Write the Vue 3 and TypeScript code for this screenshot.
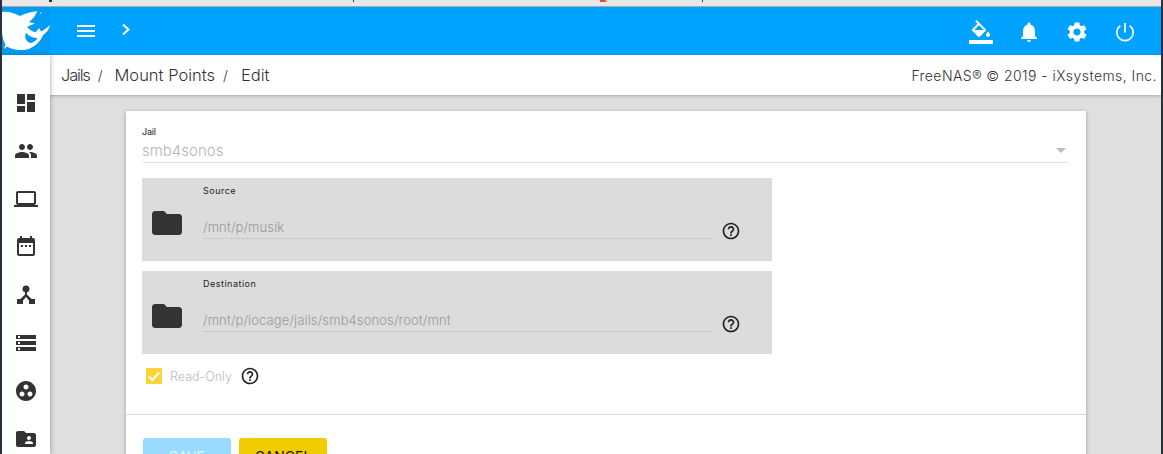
<script setup lang="ts">
type NavItem = { name: string; d: string };

const nav: NavItem[] = [
  { name: "dashboard", d: "M3 13h8V3H3v10zm0 8h8v-6H3v6zm10 0h8V11h-8v10zm0-18v6h8V3h-8z" },
  { name: "accounts", d: "M16 11c1.66 0 2.99-1.34 2.99-3S17.66 5 16 5c-1.66 0-3 1.34-3 3s1.34 3 3 3zm-8 0c1.66 0 2.99-1.34 2.99-3S9.66 5 8 5C6.34 5 5 6.34 5 8s1.34 3 3 3zm0 2c-2.33 0-7 1.17-7 3.5V19h14v-2.5c0-2.33-4.67-3.5-7-3.5zm8 0c-.29 0-.62.02-.97.05 1.16.84 1.97 1.97 1.97 3.45V19h6v-2.5c0-2.33-4.67-3.5-7-3.5z" },
  { name: "system", d: "M20 18c1.1 0 1.99-.9 1.99-2L22 6c0-1.1-.9-2-2-2H4c-1.1 0-2 .9-2 2v10c0 1.1.9 2 2 2H0v2h24v-2h-4zM4 6h16v10H4V6z" },
  { name: "tasks", d: "M9 10H7v2h2v-2zm4 0h-2v2h2v-2zm4 0h-2v2h2v-2zm2-7h-1V1h-2v2H8V1H6v2H5c-1.11 0-2 .9-2 2v14a2 2 0 0 0 2 2h14a2 2 0 0 0 2-2V5c0-1.1-.9-2-2-2zm0 16H5V8h14v11z" },
  { name: "network", d: "M12 2.500a3.500 3.500 0 0 1 1 6.860v2.200l4.600 4.440H21v5h-6v-3.600L12 14l-3 3.400V21H3v-5h3.400L11 11.560v-2.200a3.500 3.500 0 0 1 1-6.860z" },
  { name: "storage", d: "M2 20h20v-4H2v4zm2-3h2v2H4v-2zM2 4v4h20V4H2zm4 3H4V5h2v2zm-4 7h20v-4H2v4zm2-3h2v2H4v-2z" },
  { name: "directory", d: "M12 2C6.48 2 2 6.48 2 12s4.48 10 10 10 10-4.48 10-10S17.52 2 12 2zM8 17.5c-1.38 0-2.5-1.12-2.5-2.5s1.12-2.5 2.5-2.5 2.5 1.12 2.5 2.5-1.12 2.5-2.5 2.5zM9.5 8c0-1.38 1.12-2.5 2.5-2.5s2.5 1.12 2.5 2.5-1.12 2.5-2.5 2.5S9.5 9.38 9.5 8zm6.5 9.5c-1.38 0-2.5-1.12-2.5-2.5s1.12-2.5 2.5-2.5 2.5 1.12 2.5 2.5-1.12 2.5-2.5 2.5z" },
  { name: "sharing", d: "M20 6h-8l-2-2H4c-1.1 0-1.99.9-1.99 2L2 18c0 1.1.9 2 2 2h16c1.1 0 2-.9 2-2V8c0-1.1-.9-2-2-2zm-5 3c1.1 0 2 .9 2 2s-.9 2-2 2-2-.9-2-2 .9-2 2-2zm4 8h-8v-1c0-1.33 2.67-2 4-2s4 .67 4 2v1z" },
];

const folder = "M10 4H4c-1.1 0-1.99.9-1.99 2L2 18c0 1.1.9 2 2 2h16c1.1 0 2-.9 2-2V8c0-1.1-.9-2-2-2h-8l-2-2z";
const help = "M11 18h2v-2h-2v2zm1-16C6.48 2 2 6.48 2 12s4.48 10 10 10 10-4.48 10-10S17.52 2 12 2zm0 18c-4.41 0-8-3.59-8-8s3.59-8 8-8 8 3.59 8 8-3.59 8-8 8zm0-14c-2.21 0-4 1.79-4 4h2c0-1.1.9-2 2-2s2 .9 2 2c0 2-3 1.75-3 5h2c0-2.25 3-2.5 3-5 0-2.21-1.79-4-4-4z";

const paths = [
  { label: "Source", value: "/mnt/p/musik" },
  { label: "Destination", value: "/mnt/p/iocage/jails/smb4sonos/root/mnt" },
];

// clipped bits of the page text sitting behind the strip
const specks = [
  { x: 47, w: 3, c: "#333" },
  { x: 351, w: 1, c: "#246" },
  { x: 598, w: 5, c: "#e0407a" },
  { x: 603, w: 2, c: "#e0a030" },
  { x: 700, w: 1, c: "#62288a" },
];
</script>

<template>
  <div class="screen">
    <div class="strip">
      <i v-for="s in specks" :key="s.x" class="speck" :style="{ left: s.x + 'px', width: s.w + 'px', background: s.c }"></i>
    </div>

    <header class="topbar">
      <div class="logo">
        <svg width="48" height="48" viewBox="2 7 48 48">
          <path fill="#fff" d="M2 12C8 11 14 13 20 16C26 13 32 12 37 11C36 15 33 19 29 22L35 23.500L30 25.500L27 27C30 30 33 32 36 32L39 28L41 31.500C44 30 47 28 50 25C49 30 46 33 43 35C41 41 35 47 27 49.500C19 51 11 49 7 46.500L4 49L5.500 44.500C3 40 2 36 2 30Z" />
          <path fill="#009bf5" d="M26 33C24 37 26 41 30 43C33 42.500 36 41 37.500 38C33 38 29 36 26 33Z" />
          <circle cx="41" cy="13" r="1" fill="#fff" opacity="0.5" />
        </svg>
      </div>
      <button class="menu" aria-label="Menu"><span></span><span></span><span></span></button>
      <svg class="chev" width="10" height="14" viewBox="0 0 10 14" fill="none" stroke="#fff" stroke-width="2">
        <path d="M2 1.500L7.500 6.500L2 11.500" />
      </svg>
      <div class="top-actions">
        <svg width="24" height="24" viewBox="0 0 24 24" fill="#fff">
          <path d="M16.56 8.940L7.620 0 6.210 1.410l2.380 2.380-5.150 5.150c-.59.590-.59 1.540 0 2.120l5.500 5.500c.29.290.68.440 1.060.440s.77-.15 1.060-.44l5.500-5.500c.59-.58.59-1.530 0-2.120zM5.210 10L10 5.210 14.790 10H5.210zM19 11.500s-2 2.170-2 3.500c0 1.100.9 2 2 2s2-.9 2-2c0-1.330-2-3.500-2-3.500z" />
          <path d="M0 20h24v4H0z" />
        </svg>
        <svg width="24" height="24" viewBox="0 0 24 24" fill="#fff">
          <path d="M12 22c1.100 0 2-.9 2-2h-4c0 1.100.89 2 2 2zm6-6v-5c0-3.070-1.640-5.640-4.500-6.320V4c0-.83-.67-1.500-1.500-1.500s-1.500.67-1.500 1.500v.68C7.630 5.360 6 7.920 6 11v5l-2 2v1h16v-1l-2-2z" />
        </svg>
        <svg width="24" height="24" viewBox="0 0 24 24" fill="#fff">
          <path d="M19.140 12.940c.04-.3.06-.61.06-.94 0-.32-.02-.64-.07-.94l2.030-1.580c.18-.14.23-.41.12-.61l-1.920-3.320c-.12-.22-.37-.29-.59-.22l-2.390.96c-.5-.38-1.030-.7-1.620-.94l-.36-2.540c-.04-.24-.24-.41-.48-.41h-3.840c-.24 0-.43.17-.47.41l-.36 2.540c-.59.24-1.130.57-1.620.94l-2.390-.96c-.22-.08-.47 0-.59.22L2.740 8.870c-.12.21-.08.47.12.61l2.030 1.580c-.05.3-.09.63-.09.94s.02.64.07.94l-2.030 1.580c-.18.14-.23.41-.12.61l1.920 3.320c.12.22.37.29.59.22l2.390-.96c.5.38 1.030.7 1.620.94l.36 2.54c.05.24.24.41.48.41h3.840c.24 0 .44-.17.47-.41l.36-2.540c.59-.24 1.130-.56 1.620-.94l2.390.96c.22.08.47 0 .59-.22l1.920-3.320c.12-.22.07-.47-.12-.61l-2.010-1.580zM12 15.600c-1.980 0-3.600-1.620-3.600-3.600s1.620-3.600 3.600-3.600 3.600 1.620 3.600 3.600-1.620 3.600-3.600 3.600z" />
        </svg>
        <svg width="24" height="24" viewBox="0 0 24 24" fill="none" stroke="#fff" stroke-width="1.700">
          <path d="M12 3v9.500" />
          <path d="M7.300 5.800a8.200 8.200 0 1 0 9.400 0" />
        </svg>
      </div>
    </header>

    <div class="body">
      <nav class="sidebar">
        <div v-for="item in nav" :key="item.name" class="nav-item">
          <svg width="24" height="24" viewBox="0 0 24 24" fill="#333"><path :d="item.d" /></svg>
        </div>
      </nav>

      <main class="main">
        <div class="crumbs">
          <div class="trail">
            <span>Jails</span><em>/</em><span>Mount Points</span><em>/</em><span>Edit</span>
          </div>
          <div class="copyright">FreeNAS® © 2019 - iXsystems, Inc.</div>
        </div>

        <div class="content">
          <section class="card">
            <div class="fields">
              <div class="select-field">
                <label>Jail</label>
                <div class="select-value">
                  <span>smb4sonos</span>
                  <i class="caret"></i>
                </div>
              </div>

              <div v-for="p in paths" :key="p.label" class="path-box">
                <svg class="folder" width="36" height="36" viewBox="0 0 24 24" fill="#333"><path :d="folder" /></svg>
                <div class="path-input">
                  <label>{{ p.label }}</label>
                  <div class="path-value">{{ p.value }}</div>
                </div>
                <svg class="help" width="20" height="20" viewBox="0 0 24 24" fill="#222"><path :d="help" /></svg>
              </div>

              <div class="check-row">
                <span class="check">
                  <svg width="16" height="16" viewBox="0 0 16 16" fill="none" stroke="#fff" stroke-width="2"><path d="M3 8.500L6.500 12L13 4.500" /></svg>
                </span>
                <span class="check-label">Read-Only</span>
                <svg width="20" height="20" viewBox="0 0 24 24" fill="#222"><path :d="help" /></svg>
              </div>
            </div>

            <div class="actions">
              <button class="btn save">SAVE</button>
              <button class="btn cancel">CANCEL</button>
            </div>
          </section>
        </div>
      </main>
    </div>
  </div>
</template>

<style>
html, body { margin: 0; overflow: hidden; }
</style>

<style scoped>
.screen {
  width: 1163px;
  height: 454px;
  padding: 0 2px;
  box-sizing: border-box;
  overflow: hidden;
  display: flex;
  flex-direction: column;
  background: #2a3040;
  font-family: "Inter", "Liberation Sans", sans-serif;
  color: #333;
}
.strip {
  position: relative;
  flex: none;
  height: 6px;
  background: #e9e8e6;
  border-bottom: 1px solid #a9a9a6;
}
.speck { position: absolute; top: 0; height: 2px; }

.topbar {
  flex: none;
  height: 48px;
  display: flex;
  align-items: center;
  background: #00a2ff;
}
.logo {
  flex: none;
  width: 48px;
  height: 48px;
  background: #009bf5;
}
.logo svg { display: block; }
.menu {
  margin-left: 27px;
  width: 18px;
  height: 12px;
  padding: 0;
  border: 0;
  background: none;
  display: flex;
  flex-direction: column;
  justify-content: space-between;
}
.menu span { height: 2px; background: #fff; }
.chev { margin: -3px 0 0 26px; }
.top-actions {
  margin-left: auto;
  padding-right: 24px;
  display: flex;
  gap: 24px;
  margin-top: 2px;
}

.body { flex: 1; min-height: 0; display: flex; }
.sidebar {
  flex: none;
  width: 48px;
  padding-top: 24px;
  background: #fff;
  box-shadow: 1px 0 4px rgba(0, 0, 0, 0.25);
  position: relative;
  z-index: 2;
}
.nav-item {
  height: 48px;
  display: flex;
  align-items: center;
  justify-content: center;
}
.main { flex: 1; min-width: 0; display: flex; flex-direction: column; background: #dfdfdf; }
.crumbs {
  flex: none;
  height: 40px;
  padding: 0 4px 0 11px;
  display: flex;
  align-items: center;
  justify-content: space-between;
  background: #fff;
  box-shadow: 0 1px 3px rgba(0, 0, 0, 0.25);
  position: relative;
  z-index: 1;
}
.trail { display: flex; align-items: center; font-size: 16.500px; font-weight: 300; }
.trail span:first-child { letter-spacing: -1.200px; }
.trail em { font-style: normal; margin: 0 12px 0 8px; font-size: 14px; }
.trail em + span + em { margin-right: 13px; }
.copyright { font-size: 14px; font-weight: 300; letter-spacing: 0.440px; }

.content { flex: 1; min-height: 0; padding: 16px 75px 0 76px; }
.card {
  background: #fff;
  box-shadow: 0 1px 4px rgba(0, 0, 0, 0.3);
  height: 400px;
}
.fields { padding: 15px 19px 0 16px; height: 304px; box-sizing: border-box; border-bottom: 1px solid #ddd; }

.select-field label { display: block; font-size: 9px; line-height: 12px; letter-spacing: -0.200px; color: #222; }
.select-value {
  height: 24px;
  display: flex;
  align-items: center;
  justify-content: space-between;
  font-size: 15px;
  font-weight: 300;
  color: #b5b5b5;
  border-bottom: 1px dotted #ccc;
}
.caret {
  width: 0;
  height: 0;
  margin-right: 1px;
  border: 5px solid transparent;
  border-top-color: #bbb;
  border-bottom: 0;
}

.path-box {
  width: 630px;
  height: 83px;
  margin-top: 15px;
  display: flex;
  background: #dcdcdc;
}
.path-box + .path-box { margin-top: 10px; }
.folder { margin: 27px 0 0 7px; flex: none; }
.path-input { width: 509px; margin-left: 18px; flex: none; }
.path-input label {
  display: block;
  margin-top: 7px;
  font-size: 9px;
  line-height: 12px;
  letter-spacing: 0.500px;
  color: #222;
}
.path-value {
  margin-top: 21px;
  height: 21px;
  line-height: 19px;
  font-size: 13px;
  font-weight: 300;
  letter-spacing: 0.120px;
  color: #999;
  border-bottom: 1px dotted #b5b5b5;
  box-sizing: border-box;
}
.help { margin: 43px 0 0 9px; flex: none; }

.check-row { display: flex; align-items: center; height: 24px; margin-top: 10px; padding-left: 4px; }
.check {
  width: 16px;
  height: 16px;
  background: #fbd438;
  display: flex;
}
.check-label { margin: 0 8px 0 8px; font-size: 12.500px; font-weight: 300; color: #bbb; }

.actions { padding: 23px 0 0 17px; display: flex; gap: 8px; }
.btn {
  width: 88px;
  height: 36px;
  padding: 0;
  border: 0;
  border-radius: 3px;
  font-family: inherit;
  font-size: 14px;
}
.save { background: #99dbff; color: #e6f6ff; }
.cancel { background: #f0cb00; color: #111; }
</style>
